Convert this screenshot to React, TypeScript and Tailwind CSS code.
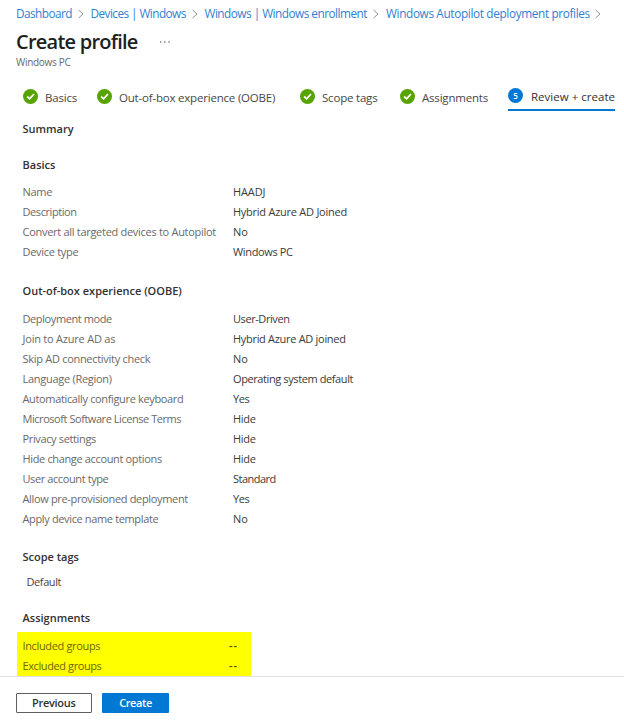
import React from "react";

type Row = { label: string; value: string; labelClass?: string; valueClass?: string };

const basics: Row[] = [
  { label: "Name", value: "HAADJ" },
  { label: "Description", value: "Hybrid Azure AD Joined", labelClass: "tracking-[-0.42px]", valueClass: "tracking-[-0.25px]" },
  { label: "Convert all targeted devices to Autopilot", value: "No" },
  { label: "Device type", value: "Windows PC", valueClass: "tracking-[-0.35px]" },
];

const oobe: Row[] = [
  { label: "Deployment mode", value: "User-Driven", labelClass: "tracking-[-0.4px]", valueClass: "tracking-[-0.42px]" },
  { label: "Join to Azure AD as", value: "Hybrid Azure AD joined", labelClass: "tracking-[-0.22px]", valueClass: "tracking-[-0.3px]" },
  { label: "Skip AD connectivity check", value: "No" },
  { label: "Language (Region)", value: "Operating system default", labelClass: "tracking-[-0.28px]", valueClass: "tracking-[-0.4px]" },
  { label: "Automatically configure keyboard", value: "Yes", labelClass: "tracking-[-0.35px]", valueClass: "tracking-[-0.4px]" },
  { label: "Microsoft Software License Terms", value: "Hide", labelClass: "tracking-[-0.45px]", valueClass: "tracking-[-0.3px]" },
  { label: "Privacy settings", value: "Hide", labelClass: "tracking-[-0.36px]", valueClass: "tracking-[-0.3px]" },
  { label: "Hide change account options", value: "Hide", labelClass: "tracking-[-0.35px]", valueClass: "tracking-[-0.3px]" },
  { label: "User account type", value: "Standard", labelClass: "tracking-[-0.4px]", valueClass: "tracking-[-0.52px]" },
  { label: "Allow pre-provisioned deployment", value: "Yes", labelClass: "tracking-[-0.34px]", valueClass: "tracking-[-0.4px]" },
  { label: "Apply device name template", value: "No", labelClass: "tracking-[-0.36px]" },
];

const groups: Row[] = [
  { label: "Included groups", value: "--", labelClass: "tracking-[-0.35px]", valueClass: "-ml-[4px] font-semibold tracking-[1px]" },
  { label: "Excluded groups", value: "--", labelClass: "tracking-[-0.4px]", valueClass: "-ml-[4px] font-semibold tracking-[1px]" },
];

const crumbs = [
  { label: "Dashboard", width: "w-[74.5px] tracking-[-0.55px]" },
  { label: "Devices | Windows", width: "w-[114px] tracking-[-0.56px]" },
  { label: "Windows | Windows enrollment", width: "w-[181.5px] tracking-[-0.51px]" },
  { label: "Windows Autopilot deployment profiles", width: "w-[222px] tracking-[-0.36px]" },
];

const steps = [
  { label: "Basics", width: "w-[74px]" },
  { label: "Out-of-box experience (OOBE)", width: "w-[203px]" },
  { label: "Scope tags", width: "w-[100px]" },
  { label: "Assignments", width: "w-[108.5px]" },
];

function Chevron() {
  return (
    <svg width="6" height="10" viewBox="0 0 6 10" className="ml-auto mr-[7px] shrink-0" fill="none" stroke="#8a8886" strokeWidth="0.9">
      <path d="M0.6 1 L5 5 L0.6 9" />
    </svg>
  );
}

function Check() {
  return (
    <svg width="15" height="15" viewBox="0 0 15 15" className="shrink-0">
      <circle cx="7.5" cy="7.5" r="7.5" fill="#57a300" />
      <path d="M4.1 7.5 L6.6 9.8 L11 5" fill="none" stroke="#fff" strokeWidth="1.8" />
    </svg>
  );
}

function Rows({ rows, tone = "text-[#6b6967]", valueTone = "text-[#3b3a39]" }: { rows: Row[]; tone?: string; valueTone?: string }) {
  return (
    <dl className="leading-5">
      {rows.map((row) => (
        <div key={row.label} className="flex h-5 whitespace-nowrap">
          <dt className={`w-[210.5px] shrink-0 ${tone} ${row.labelClass ?? "tracking-[-0.29px]"}`}>{row.label}</dt>
          <dd className={`${valueTone} ${row.valueClass ?? "tracking-[-0.1px]"}`}>{row.value}</dd>
        </div>
      ))}
    </dl>
  );
}

function Heading({ children }: { children: React.ReactNode }) {
  return <h2 className="h-5 font-semibold leading-5 text-[#323130]">{children}</h2>;
}

export default function App() {
  return (
    <div className="flex h-[727px] w-[624px] flex-col overflow-hidden bg-white font-['Open_Sans','Noto_Sans',sans-serif] text-[11px]">
      <nav className="flex h-7 shrink-0 items-center whitespace-nowrap pl-4 text-[11.8px] text-[#2f7fd1]">
        {crumbs.map((c) => (
          <div key={c.label} className={`flex shrink-0 items-center ${c.width}`}>
            <a>{c.label}</a>
            <Chevron />
          </div>
        ))}
      </nav>

      <header className="h-[54px] shrink-0 pl-4">
        <div className="flex h-7 items-center">
          <h1 className="w-36 whitespace-nowrap text-[20px] font-semibold leading-7 tracking-[-0.76px] text-[#201f1e]">Create profile</h1>
          <svg width="10" height="2" viewBox="0 0 10 2" fill="#605e5c">
            <rect x="0" y="0.4" width="1.3" height="1.3" />
            <rect x="4.2" y="0.4" width="1.3" height="1.3" />
            <rect x="8.4" y="0.4" width="1.3" height="1.3" />
          </svg>
        </div>
        <p className="text-[10px] leading-[13px] tracking-[-0.3px] text-[#6b6967]">Windows PC</p>
      </header>

      <div className="flex h-[30px] shrink-0 whitespace-nowrap pl-[22.5px] text-[11.5px] tracking-[-0.2px] text-[#484644]">
        {steps.map((s) => (
          <div key={s.label} className={`flex h-7 shrink-0 items-center gap-[7.5px] ${s.width}`}>
            <Check />
            <span className="pt-[3px]">{s.label}</span>
          </div>
        ))}
        <div className="flex h-[29px] w-[107px] shrink-0 items-center gap-2 border-b-2 border-[#0078d4] tracking-[0.02px] text-[#323130]">
          <span className="flex size-[15px] shrink-0 items-center justify-center rounded-full bg-[#0078d4] text-[8px] font-semibold text-white">5</span>
          <span className="pt-[3px]">Review + create</span>
        </div>
      </div>

      <main className="h-[564px] shrink-0 overflow-hidden pl-[22.5px] pt-[7px]">
        <Heading>Summary</Heading>
        <section className="mt-4">
          <Heading>Basics</Heading>
          <div className="mt-[7px]"><Rows rows={basics} /></div>
        </section>
        <section className="mt-[19px]">
          <Heading>Out-of-box experience (OOBE)</Heading>
          <div className="mt-2"><Rows rows={oobe} /></div>
        </section>
        <section className="mt-[18px]">
          <Heading>Scope tags</Heading>
          <p className="mt-[5px] pl-1 leading-5 tracking-[-0.4px] text-[#484644]">Default</p>
        </section>
        <section className="mt-4">
          <Heading>Assignments</Heading>
          <div className="-ml-[5.5px] mt-1 h-11 w-[234px] bg-[#ffff00] pl-[5.5px] pt-1">
            <Rows rows={groups} tone="text-[#6b6900]" valueTone="text-[#4a4900]" />
          </div>
        </section>
      </main>

      <footer className="flex flex-1 items-start gap-[10px] border-t border-[#e1e1e1] pl-[15.5px] pt-4 font-semibold">
        <button className="h-5 w-[76.5px] rounded-[1px] border border-[#605e5c] leading-[18px] tracking-[-0.3px] text-[#323130]">Previous</button>
        <button className="h-5 w-[67px] rounded-[1px] bg-[#0078d4] leading-5 tracking-[-0.4px] text-white">Create</button>
      </footer>
    </div>
  );
}
